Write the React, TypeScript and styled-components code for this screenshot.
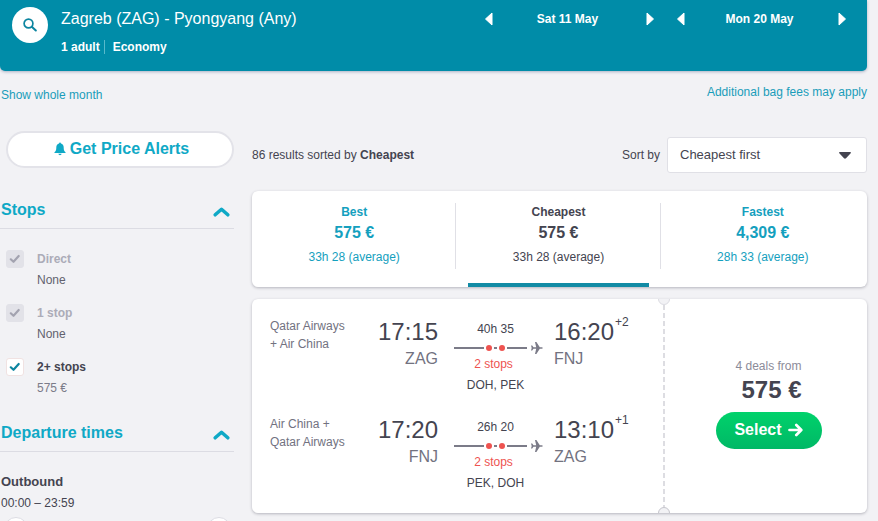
import React, { useState } from 'react';
import styled, { createGlobalStyle, css } from 'styled-components';

const GlobalStyle = createGlobalStyle`
  *, *::before, *::after { box-sizing: border-box; }
  body {
    margin: 0;
    background: #f2f2f5;
    color: #444450;
    font-family: "Liberation Sans", Arial, sans-serif;
    font-size: 12px;
    line-height: 18px;
  }
  button, select, input { font: inherit; color: inherit; margin: 0; }
  button { border: 0; padding: 0; background: none; cursor: pointer; }
  h1, h2, h3, p, fieldset { margin: 0; padding: 0; border: 0; }
  svg { display: block; flex: none; }
`;

const Page = styled.div`
  height: 100vh;
  overflow: hidden;
  padding-right: 11px;
`;

const Header = styled.header`
  display: flex;
  align-items: flex-start;
  gap: 13px;
  min-height: 71px;
  padding: 7px 21px 14px 12px;
  background: #008ca8;
  color: #fff;
  border-radius: 0 0 5px 5px;
  box-shadow: 0 1px 3px rgba(40, 60, 110, 0.35);
`;

const SearchButton = styled.button`
  display: grid;
  place-items: center;
  width: 36px;
  height: 36px;
  border-radius: 50%;
  background: #fff;
  color: #0c85a0;
`;

const Trip = styled.div`
  flex: 1;
`;

const Route = styled.h1`
  font-size: 16px;
  font-weight: 400;
  line-height: 24px;
`;

const TripFacts = styled.p`
  display: flex;
  gap: 4px;
  margin-top: 9px;
  font-weight: 700;
  line-height: 14px;

  span + span {
    padding-left: 8px;
    border-left: 1px solid #58b9cb;
  }
`;

const Dates = styled.div`
  display: flex;
  gap: 23px;
  padding-top: 3px;
`;

const DatePicker = styled.div`
  display: flex;
  align-items: center;
  width: 169px;
`;

const DateLabel = styled.span`
  flex: 1;
  padding-right: 4px;
  text-align: center;
  font-weight: 700;
`;

const Links = styled.nav`
  display: flex;
  justify-content: space-between;
  height: 60px;
  padding: 12px 0 0 1px;
`;

const TextLink = styled.a<{ $low?: boolean }>`
  color: #1a9dba;
  text-decoration: none;
  padding-top: ${(p) => (p.$low ? 3 : 0)}px;
`;

const Columns = styled.div`
  display: grid;
  grid-template-columns: 234px minmax(0, 1fr);
  gap: 18px;
`;

const Sidebar = styled.aside`
  min-width: 0;
`;

const AlertButton = styled.button`
  display: flex;
  align-items: center;
  justify-content: center;
  gap: 4px;
  width: calc(100% - 6px);
  height: 37px;
  margin: 0 0 7px 6px;
  padding: 0 0 2px 3px;
  border: 2px solid #e3e3e9;
  border-radius: 19px;
  background: #fff;
  color: #0fa9c6;
  font-size: 16px;
  font-weight: 700;
`;

const Section = styled.section`
  padding-top: 21px;
`;

const SectionHead = styled.button`
  display: flex;
  align-items: center;
  justify-content: space-between;
  width: 100%;
  height: 33px;
  padding: 0 4px 4px 1px;
  border-bottom: 1px solid #dcdce3;
  color: #0fa9c6;
  font-size: 16px;
  font-weight: 700;

  svg { margin-top: 4px; }
`;

const StopList = styled.fieldset`
  display: grid;
  gap: 12px;
  padding: 19px 0 0 6px;
`;

const StopOption = styled.label<{ $off?: boolean }>`
  display: grid;
  grid-template-columns: 18px 1fr;
  column-gap: 13px;
  align-items: center;
  grid-template-rows: 21px 21px;
  font-weight: 700;
  color: ${(p) => (p.$off ? '#acacb8' : '#444450')};
`;

const CheckCell = styled.span`
  display: grid;
  place-items: center;
  color: #0c85a0;

  > * { grid-area: 1 / 1; }
  svg { pointer-events: none; }
  &:has(input:disabled) { color: #a3a3b0; }
  input:not(:checked) + svg { visibility: hidden; }
`;

const Check = styled.input`
  appearance: none;
  width: 18px;
  height: 18px;
  border: 1px solid #f0e2e2;
  border-radius: 3px;
  background: #fff;

  &:disabled {
    border-color: #e2e2e8;
    background: #e2e2e8;
  }
`;

const StopPrice = styled.span<{ $faint?: boolean }>`
  grid-column: 2;
  font-weight: 400;
  color: ${(p) => (p.$faint ? '#7b7b89' : '#62626e')};
`;

const TimeBlock = styled.div`
  padding: 19px 0 0 1px;
`;

const TimeTitle = styled.h3`
  font-size: 13px;
  line-height: 22px;
`;

const TimeRange = styled.p`
  line-height: 21px;
`;

const RangeTrack = styled.div`
  display: grid;
  margin: 3px 3px 0;
`;

const RangeInput = styled.input`
  grid-area: 1 / 1;
  appearance: none;
  width: 100%;
  height: 24px;
  background: none;
  pointer-events: none;

  &::-webkit-slider-thumb {
    appearance: none;
    width: 24px;
    height: 24px;
    border: 1px solid #dcdce3;
    border-radius: 50%;
    background: #fff;
    pointer-events: auto;
  }
`;

const Main = styled.main`
  display: grid;
  gap: 12px;
  min-width: 0;
  align-content: start;
`;

const SortBar = styled.div`
  display: flex;
  align-items: center;
  justify-content: space-between;
  height: 48px;
  padding: 6px 0;
`;

const SortLabel = styled.label`
  display: flex;
  align-items: center;
  gap: 7px;
`;

const SelectBox = styled.span`
  display: grid;
  align-items: center;
  width: 200px;

  > * { grid-area: 1 / 1; }
  svg { justify-self: end; margin-right: 16px; pointer-events: none; }
`;

const SortSelect = styled.select`
  appearance: none;
  width: 100%;
  height: 36px;
  padding: 0 36px 0 12px;
  border: 1px solid #e0e0e6;
  border-radius: 3px;
  background: #fff;
  font-size: 13px;
`;

const cardLook = css`
  background: #fff;
  border-radius: 6px;
  box-shadow: 0 1px 3px rgba(40, 40, 60, 0.3);
`;

const Tabs = styled.div`
  ${cardLook}
  display: grid;
  grid-template-columns: repeat(3, 1fr);
  padding-right: 2px;
`;

const Tab = styled.button<{ $active?: boolean }>`
  display: grid;
  justify-items: center;
  align-content: start;
  height: 96px;
  padding-top: 12px;
  color: ${(p) => (p.$active ? '#444450' : '#14a0be')};
  background:
    linear-gradient(#e0e0e6, #e0e0e6) right 12px / 1px 66px no-repeat,
    linear-gradient(#128ba5, #128ba5) center bottom / calc(100% - 24px) ${(p) => (p.$active ? 4 : 0)}px no-repeat;

  &:last-child { background-size: 0 0, calc(100% - 24px) ${(p) => (p.$active ? 4 : 0)}px; }
`;

const TabName = styled.span`
  font-weight: 700;
`;

const TabPrice = styled.span`
  font-size: 16px;
  font-weight: 700;
  line-height: 24px;
`;

const TabTime = styled.span`
  line-height: 24px;
`;

const Ticket = styled.article`
  ${cardLook}
  display: grid;
  grid-template-columns: minmax(0, 1fr) 203px;
`;

const Legs = styled.div`
  display: grid;
  gap: 18px;
  padding: 18px;
`;

const Leg = styled.div`
  display: grid;
  grid-template-columns: 84px 84px 105px 1fr;
`;

const Airline = styled.p`
  color: #72727f;
`;

const Stop = styled.div<{ $end?: boolean }>`
  text-align: ${(p) => (p.$end ? 'right' : 'left')};
  padding-left: ${(p) => (p.$end ? 0 : 11)}px;
`;

const Time = styled.p`
  display: flex;
  font-size: 24px;
  line-height: 30px;
`;

const DepartTime = styled(Time)`
  justify-content: flex-end;
`;

const DayShift = styled.sup`
  margin-left: 1px;
  font-size: 12px;
  line-height: 10px;
`;

const Airport = styled.p`
  font-size: 16px;
  line-height: 24px;
  color: #72727f;
`;

const Journey = styled.div`
  display: grid;
  grid-template-rows: 24px 14px 18px 24px;
  align-items: center;
  padding-left: 16px;
  text-align: center;
`;

const Span = styled.span`
  padding-right: 6px;
`;

const StopCount = styled(Span)`
  padding-right: 10px;
  color: #ee5350;
`;

const DealSide = styled.div`
  display: grid;
  grid-template-columns: 6px minmax(0, 1fr);
`;

const Deal = styled.div`
  display: grid;
  align-content: center;
  justify-items: center;
  padding-bottom: 6px;
`;

const DealText = styled.div`
  display: grid;
  justify-items: end;
  width: 106px;
  padding-right: 20px;
`;

const DealCount = styled.span`
  color: #8b8b99;
`;

const DealPrice = styled.strong`
  font-size: 24px;
  line-height: 30px;
`;

const SelectButton = styled.button`
  display: flex;
  align-items: center;
  justify-content: center;
  gap: 6px;
  width: 106px;
  height: 37px;
  margin-top: 7px;
  padding-bottom: 2px;
  border-radius: 19px;
  background: linear-gradient(#00d26b, #00b866);
  color: #fff;
  font-size: 16px;
  font-weight: 700;
`;

const Perforation = styled.div`
  display: flex;
  flex-direction: column;
  align-items: center;
  width: 12px;
  margin-left: -6px;
`;

const Dashes = styled.div`
  flex: 1;
  width: 2px;
  background: repeating-linear-gradient(#dddde2 0 5px, transparent 5px 8px);
`;

const Arrow = ({ next }: { next?: boolean }) => (
  <svg width="8" height="14" viewBox="0 0 8 14" aria-hidden="true">
    <path d={next ? 'M1 1v12l6.500-6z' : 'M7 1v12L.5 7z'} fill="#fff" stroke="#fff" strokeWidth="1" strokeLinejoin="round" />
  </svg>
);

const Chevron = () => (
  <svg width="17" height="10" viewBox="0 0 17 10" aria-hidden="true">
    <path d="M2.200 7.800l6.300-5.600 6.300 5.600" fill="none" stroke="currentColor" strokeWidth="3.500" strokeLinecap="round" strokeLinejoin="round" />
  </svg>
);

const Tick = () => (
  <svg width="12" height="10" viewBox="0 0 12 10" aria-hidden="true">
    <path d="M1.800 5.300l2.700 2.500 5.200-5.800" fill="none" stroke="currentColor" strokeWidth="2.200" strokeLinecap="round" strokeLinejoin="round" />
  </svg>
);

const FlightLine = () => (
  <svg width="89" height="14" viewBox="0 0 89 14" aria-hidden="true">
    <path d="M0 7h30M40 7h3M53 7h20" stroke="#7b7b88" strokeWidth="2" />
    <circle cx="35" cy="7" r="3" fill="#ee5350" />
    <circle cx="48" cy="7" r="3" fill="#ee5350" />
    <path
      d="M77 4.500h1.200l1.300 1.800h2.700L81 1h1.400l3.400 5.300h1.800c.8 0 1.200.3 1.200.7s-.4.700-1.200.7h-1.800L82.400 13H81l1.200-5.300h-2.700l-1.300 1.800H77l.7-2.500z"
      fill="#7b7b88"
    />
  </svg>
);

const Notch = ({ flip }: { flip?: boolean }) => (
  <svg width="12" height="6" viewBox="0 0 12 6" aria-hidden="true">
    <path d={flip ? 'M0 6a6 6 0 0 1 12 0z' : 'M0 0a6 6 0 0 0 12 0z'} fill="#f2f2f5" />
    <path d={flip ? 'M.5 6a5.500 5.500 0 0 1 11 0' : 'M.5 0a5.500 5.500 0 0 0 11 0'} fill="none" stroke={flip ? '#c6c6cc' : '#dddde2'} />
  </svg>
);

const stops = [
  { name: 'Direct', price: 'None', off: true },
  { name: '1 stop', price: 'None', off: true },
  { name: '2+ stops', price: '575 €', off: false },
];

const tabs = [
  { name: 'Best', price: '575 €', time: '33h 28 (average)' },
  { name: 'Cheapest', price: '575 €', time: '33h 28 (average)' },
  { name: 'Fastest', price: '4,309 €', time: '28h 33 (average)' },
];

const legs = [
  { airline: 'Qatar Airways + Air China', out: '17:15', from: 'ZAG', length: '40h 35', via: 'DOH, PEK', arrive: '16:20', shift: '+2', to: 'FNJ' },
  { airline: 'Air China + Qatar Airways', out: '17:20', from: 'FNJ', length: '26h 20', via: 'PEK, DOH', arrive: '13:10', shift: '+1', to: 'ZAG' },
];

export default function App() {
  const [tab, setTab] = useState('Cheapest');

  return (
    <>
      <GlobalStyle />
      <Page>
        <Header>
          <SearchButton aria-label="Edit search">
            <svg width="14" height="14" viewBox="0 0 14 14" aria-hidden="true">
              <circle cx="5.500" cy="5.500" r="4.400" fill="none" stroke="currentColor" strokeWidth="1.700" />
              <path d="M8.800 8.800l4 3.700" stroke="currentColor" strokeWidth="2" strokeLinecap="round" />
            </svg>
          </SearchButton>
          <Trip>
            <Route>Zagreb (ZAG) - Pyongyang (Any)</Route>
            <TripFacts>
              <span>1 adult</span>
              <span>Economy</span>
            </TripFacts>
          </Trip>
          <Dates>
            {['Sat 11 May', 'Mon 20 May'].map((date) => (
              <DatePicker key={date}>
                <button aria-label="Previous day"><Arrow /></button>
                <DateLabel>{date}</DateLabel>
                <button aria-label="Next day"><Arrow next /></button>
              </DatePicker>
            ))}
          </Dates>
        </Header>

        <Links>
          <TextLink href="#month" $low>Show whole month</TextLink>
          <TextLink href="#bags">Additional bag fees may apply</TextLink>
        </Links>

        <Columns>
          <Sidebar>
            <AlertButton>
              <svg width="12" height="14" viewBox="0 0 13 14" aria-hidden="true">
                <path d="M6.500 0c.7 0 1 .4 1 1 2 .6 3 2.200 3 4.300 0 3 .6 4 2 5.200v.8H.5v-.8c1.400-1.200 2-2.200 2-5.200 0-2.100 1-3.700 3-4.300 0-.6.3-1 1-1zM4.700 12.200h3.600c-.2 1-.9 1.500-1.800 1.500s-1.600-.5-1.800-1.500z" fill="currentColor" />
              </svg>
              Get Price Alerts
            </AlertButton>

            <Section>
              <SectionHead aria-expanded="true">Stops<Chevron /></SectionHead>
              <StopList aria-label="Stops">
                {stops.map((s) => (
                  <StopOption key={s.name} $off={s.off}>
                    <CheckCell>
                      <Check type="checkbox" defaultChecked disabled={s.off} />
                      <Tick />
                    </CheckCell>
                    {s.name}
                    <StopPrice $faint={!s.off}>{s.price}</StopPrice>
                  </StopOption>
                ))}
              </StopList>
            </Section>

            <Section>
              <SectionHead aria-expanded="true">Departure times<Chevron /></SectionHead>
              <TimeBlock>
                <TimeTitle>Outbound</TimeTitle>
                <TimeRange>00:00 – 23:59</TimeRange>
                <RangeTrack>
                  <RangeInput type="range" min={0} max={1439} defaultValue={0} aria-label="Earliest outbound departure" />
                  <RangeInput type="range" min={0} max={1439} defaultValue={1439} aria-label="Latest outbound departure" />
                </RangeTrack>
              </TimeBlock>
            </Section>
          </Sidebar>

          <Main>
            <SortBar>
              <span>86 results sorted by <strong>Cheapest</strong></span>
              <SortLabel>
                Sort by
                <SelectBox>
                  <SortSelect defaultValue="Cheapest first">
                    <option>Cheapest first</option>
                    <option>Fastest first</option>
                    <option>Best first</option>
                  </SortSelect>
                  <svg width="12" height="7" viewBox="0 0 12 7" aria-hidden="true">
                    <path d="M.8 0h10.400c.7 0 1 .7.5 1.200L7 6.200c-.6.6-1.400.6-2 0L.3 1.200C-.2.700.1 0 .8 0z" fill="#444450" />
                  </svg>
                </SelectBox>
              </SortLabel>
            </SortBar>

            <Tabs>
              {tabs.map((t) => (
                <Tab key={t.name} $active={t.name === tab} aria-pressed={t.name === tab} onClick={() => setTab(t.name)}>
                  <TabName>{t.name}</TabName>
                  <TabPrice>{t.price}</TabPrice>
                  <TabTime>{t.time}</TabTime>
                </Tab>
              ))}
            </Tabs>

            <Ticket>
              <Legs>
                {legs.map((leg) => (
                  <Leg key={leg.out}>
                    <Airline>{leg.airline}</Airline>
                    <Stop $end>
                      <DepartTime>{leg.out}</DepartTime>
                      <Airport>{leg.from}</Airport>
                    </Stop>
                    <Journey>
                      <Span>{leg.length}</Span>
                      <FlightLine />
                      <StopCount>2 stops</StopCount>
                      <Span>{leg.via}</Span>
                    </Journey>
                    <Stop>
                      <Time>{leg.arrive}<DayShift>{leg.shift}</DayShift></Time>
                      <Airport>{leg.to}</Airport>
                    </Stop>
                  </Leg>
                ))}
              </Legs>
              <DealSide>
                <Perforation>
                  <Notch />
                  <Dashes />
                  <Notch flip />
                </Perforation>
                <Deal>
                  <DealText>
                    <DealCount>4 deals from</DealCount>
                    <DealPrice>575 €</DealPrice>
                  </DealText>
                  <SelectButton>
                    Select
                    <svg width="15" height="14" viewBox="0 0 15 14" aria-hidden="true">
                      <path d="M1.500 7h11.500M8.300 2l5 5-5 5" fill="none" stroke="currentColor" strokeWidth="2.700" strokeLinecap="round" strokeLinejoin="round" />
                    </svg>
                  </SelectButton>
                </Deal>
              </DealSide>
            </Ticket>
          </Main>
        </Columns>
      </Page>
    </>
  );
}
